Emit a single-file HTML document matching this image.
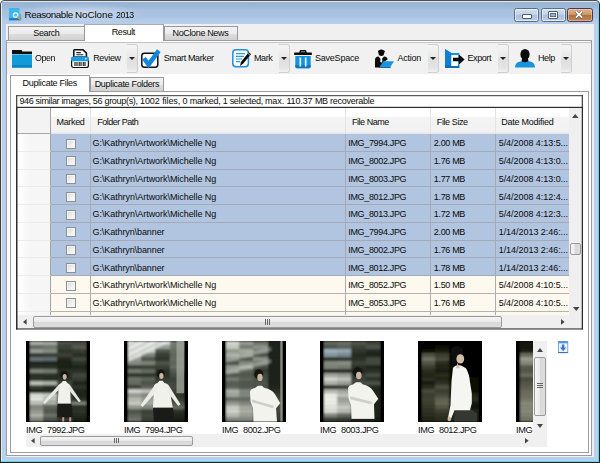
<!DOCTYPE html>
<html><head><meta charset="utf-8"><title>Reasonable NoClone 2013</title>
<style>
*,*:before,*:after{box-sizing:border-box;margin:0;padding:0}
html,body{width:600px;height:463px;overflow:hidden;background:#fff}
body{font-family:"Liberation Sans",sans-serif;font-size:9px;color:#000;position:relative}
#win{position:absolute;left:0;top:0;width:600px;height:463px;background:#b7d0ec;overflow:hidden}
#win>*,.row>*{position:absolute}
.t{position:absolute;white-space:pre;line-height:12px;color:#0a0a0a;z-index:5}
#title{left:0;top:0;width:600px;height:24px;background:linear-gradient(#99b3d5 0,#9cb6d7 27%,#a7c0de 40%,#aac4e1 72%,#b3c9e8 80%,#b6ceea 100%)}
#client{left:6px;top:24px;width:588px;height:433px;background:#f0f0f0}
.wb{top:8px;height:14px;border:1px solid #5b6c86;border-radius:2.5px;background:linear-gradient(#d3e0f0,#c2d2e8 45%,#a9bfdc 52%,#bccfe7);box-shadow:inset 0 0 0 1px rgba(255,255,255,.55)}
.wb *{position:absolute}
.tab{border:1px solid #96989d;border-bottom:none;background:linear-gradient(#f2f2f2,#ebebeb 50%,#dddddd 52%,#d0d0d0)}
.tab.on{background:#fff;z-index:3}
.page{background:#fff;border:1px solid #9a9ca1}
.dd{top:44px;height:28.5px;width:11px;border:1px solid #cfcfcf;border-left:none;border-radius:0 3px 3px 0;background:linear-gradient(#f4f4f4,#e9e9e9 45%,#dedede 50%,#e4e4e4 85%,#f2f2f2)}
.dd:after{content:"";position:absolute;left:2.2px;top:12px;border:3.2px solid transparent;border-top:3.8px solid #222;border-bottom:none}
svg{position:absolute;overflow:visible}
.hdr{top:108px;height:26px;background:linear-gradient(#fff,#fff 32%,#f4f4f4 36%,#f2f2f2 90%,#e4e4e4);border-right:1px solid #e3e3e3}
.row{position:absolute;left:0;width:600px;height:17.75px}
.row .c{top:0;height:17.75px;background:#fdf9ef;border-right:1px solid #adadb0;border-bottom:1px solid #b4b4b8}
.row .c.l{border-right:none}
.row.sel .c{background:#b1c5e0;border-color:#a4aab6}
.row:before{content:"";position:absolute;left:17px;top:0;width:34px;height:17.75px;background:linear-gradient(90deg,#fff,#f6f6f6 40%);border-right:1px solid #a3a3a3;border-bottom:1px solid #ebebeb}
.cb{width:10px;height:10px;border:1px solid #8e8f8f;background:linear-gradient(135deg,#d5d7d8,#f6f6f6 70%);box-shadow:inset 0 0 0 1px #f4f4f4}
.sth{position:absolute;border:1px solid #9a9a9a;border-radius:2px;background:linear-gradient(#f6f6f6,#eaeaea 45%,#d8d8d8 50%,#dedede)}
.sth.v{background:linear-gradient(90deg,#f6f6f6,#eaeaea 45%,#d8d8d8 50%,#dedede)}
.thumb{top:341.3px;width:64px;height:80.4px;background:#000;overflow:hidden}
</style></head><body>
<div id="win">
<div id="title"></div>
<!-- frame edges -->
<div style="left:0;top:0;width:1px;height:463px;background:#3f4036"></div>
<div style="left:1px;top:1px;width:1px;height:461px;background:#e4ecf6"></div>
<div style="left:599px;top:0;width:1px;height:463px;background:#1c2226"></div>
<div style="left:598px;top:1px;width:1px;height:461px;background:#5fd4f2"></div>
<div style="left:0;top:0;width:600px;height:1px;background:#515246"></div>
<div style="left:1px;top:1px;width:598px;height:1px;background:#dbe5f2"></div>
<div style="left:0;top:462px;width:600px;height:1px;background:#1d2024"></div>
<div style="left:1px;top:461px;width:598px;height:1px;background:#5fd4f2"></div>
<!-- rounded corners -->
<svg style="left:0;top:0" width="4" height="4"><path d="M0 0H4V1Q1 1 1 4H0z" fill="#fff"/><path d="M.5 4Q.5 .5 4 .5" fill="none" stroke="#4e4f43"/></svg>
<svg style="left:596px;top:0" width="4" height="4"><path d="M4 0H0V1Q3 1 3 4H4z" fill="#fff"/><path d="M3.5 4Q3.5 .5 0 .5" fill="none" stroke="#3a3c36"/></svg>
<!-- app icon -->
<svg style="left:8.8px;top:7.7px" width="12.2" height="12.3" viewBox="0 0 12.2 12.3"><path d="M0 0H10.4V5.2L12.2 6.4V12.3H0z" fill="#3db7e9"/><rect y="10.2" width="12.2" height="2.1" fill="#1b7ccb"/><circle cx="6.6" cy="7" r="2.3" fill="#55c3ef" stroke="#fff" stroke-width="1.1"/><path d="M8.6 9L11.4 11.6" stroke="#e89a30" stroke-width="1.5" stroke-linecap="round"/></svg>
<div style="left:14px;top:3px;width:132px;height:20px;border-radius:10px;background:radial-gradient(ellipse at center,rgba(255,255,255,.42),rgba(255,255,255,0) 70%)"></div>
<span class="t " id="t54" style="left:24.50px;top:9.40px;font-size:9.8px;letter-spacing:-0.411px;">Reasonable </span><span class="t " id="t55" style="left:75.00px;top:9.40px;font-size:9.8px;letter-spacing:-0.043px;">NoClone </span><span class="t " id="t56" style="left:115.50px;top:9.40px;font-size:9.8px;letter-spacing:-0.450px;transform:scaleX(0.888);transform-origin:0 0;">2013</span>
<!-- window buttons -->
<div class="wb" style="left:514px;width:25px"><div style="left:7.2px;top:5.4px;width:9.5px;height:4.2px;border:1px solid #4c5c74;background:#fff;border-radius:1px"></div></div>
<div class="wb" style="left:541px;width:25px"><div style="left:6.3px;top:2.4px;width:9.4px;height:7.6px;border:1px solid #4c5c74;background:#fff;border-radius:1px"><div style="left:1px;top:1px;width:5.4px;height:3.6px;border:1px solid #5b6b83;background:#9fb3cf"></div></div></div>
<div class="wb" style="left:567px;width:25.5px;border-color:#4a3560;background:linear-gradient(#e0b183,#d19a64 45%,#aa7040 52%,#c0874f);box-shadow:inset 0 0 0 1px rgba(255,225,190,.45)"><svg style="left:7px;top:2px" width="8" height="7.2" viewBox="0 0 9 8"><path d="M1 0.5L8 7.5M8 0.5L1 7.5" stroke="#5b4a4a" stroke-width="3.3"/><path d="M1 0.5L8 7.5M8 0.5L1 7.5" stroke="#fff" stroke-width="2"/></svg></div>

<div id="client"></div>

<!-- main tabs -->
<div class="tab" style="left:8px;top:26px;width:76.5px;height:14.5px"></div>
<div class="tab" style="left:163.5px;top:26px;width:74.5px;height:14.5px"></div>
<div class="page" style="left:6px;top:40px;width:586px;height:416px"></div>
<div class="tab on" style="left:84px;top:24px;width:80px;height:17px;border-top-color:#aab"></div>
<span class="t " id="t57" style="left:33.30px;top:26.88px;font-size:9.0px;letter-spacing:-0.389px;">Search</span><span class="t " id="t58" style="left:111.75px;top:25.88px;font-size:9.0px;letter-spacing:-0.378px;">Result</span><span class="t " id="t59" style="left:172.50px;top:27.48px;font-size:9.0px;letter-spacing:-0.353px;">NoClone News</span>

<!-- toolbar -->
<div style="left:7px;top:42px;width:584px;height:31.5px;background:#f1f1f1;border-top:1px solid #c4c4c4"></div>
<svg style="left:12px;top:50px" width="20" height="18" viewBox="0 0 20 18"><path d="M0 0h9.5l1 1.6H20V4H0z" fill="#0c0c0c"/><rect y="4.4" width="20" height="13.2" fill="#129bd9"/><rect y="15" width="20" height="2.6" fill="#0d83c2"/></svg>
<span class="t " id="t40" style="left:34.70px;top:52.48px;font-size:9.0px;letter-spacing:-0.450px;transform:scaleX(0.989);transform-origin:0 0;">Open</span><svg style="left:70.8px;top:49px" width="18" height="19" viewBox="0 0 18 19"><path d="M2.8 8V1.6Q2.8 .8 3.6 .8H12L15.4 4V8z" fill="#fff" stroke="#111" stroke-width="1.6"/><path d="M5.3 3.6h4.5M5.3 5.8h7" stroke="#222" stroke-width="1.1"/><rect x=".6" y="10.5" width="16.8" height="8" rx="2" fill="#fff" stroke="#111" stroke-width="1.2"/><rect x="0" y="7.6" width="18" height="4.6" rx="1.8" fill="#1d9be0"/><circle cx="14.7" cy="9.6" r=".9" fill="#dff"/><path d="M4 13v4M6 13v4M8.2 13v4M10 13v4M12.3 13v4M14 13v4" stroke="#111" stroke-width="1.1"/></svg>
<span class="t " id="t41" style="left:93.20px;top:52.48px;font-size:9.0px;letter-spacing:-0.319px;">Review</span><div class="dd" style="left:126.7px"></div><svg style="left:140.8px;top:49px" width="20" height="19" viewBox="0 0 20 19"><rect x=".8" y="4.2" width="16" height="14" rx="2.6" fill="#fff" stroke="#111" stroke-width="1.5"/><path d="M3 9.2L7.6 15.6L17.8 1.6" fill="none" stroke="#1487dd" stroke-width="4.5" stroke-linejoin="miter"/></svg>
<span class="t " id="t42" style="left:163.70px;top:52.48px;font-size:9.0px;letter-spacing:-0.376px;">Smart Marker</span><svg style="left:231.5px;top:49px" width="20" height="19" viewBox="0 0 20 19"><rect x=".8" y=".8" width="15.6" height="17" rx="3.2" fill="#fff" stroke="#1c8fe0" stroke-width="1.5"/><path d="M4 4.6h9M4 7.3h8M4 10h6M4 12.7h4" stroke="#2a9be6" stroke-width="1.2"/><path d="M16.8 3.2L19 5.2L11.3 14.6L8 17L8.9 13z" fill="#0b0b0b"/><path d="M16 4.4L18 6.3" stroke="#fff" stroke-width=".7"/></svg>
<span class="t " id="t43" style="left:254.00px;top:52.48px;font-size:9.0px;letter-spacing:-0.375px;">Mark</span><div class="dd" style="left:278.5px"></div><svg style="left:294px;top:49.5px" width="18" height="19" viewBox="0 0 18 19"><path d="M5.2 3L5.8 .6Q6 0 6.6 0H11.4Q12 0 12.2 .6L12.8 3z" fill="#111"/><rect x="7" y="1.2" width="4" height="1.3" fill="#888"/><rect x="0" y="2.5" width="18" height="2.6" rx=".8" fill="#0d0d0d"/><path d="M1.3 6h15.4v10.6q0 1.6-1.6 1.6H2.9q-1.6 0-1.6-1.6z" fill="#1593dc"/><path d="M1.3 15h15.4v1.6q0 1.6-1.6 1.6H2.9q-1.6 0-1.6-1.6z" fill="#0e77bd"/><path d="M6.3 7.5v9M11.7 7.5v9" stroke="#e8f4fc" stroke-width="1.7"/></svg>
<span class="t " id="t44" style="left:315.00px;top:52.48px;font-size:9.0px;letter-spacing:-0.227px;">SaveSpace</span><svg style="left:374px;top:49px" width="20" height="19" viewBox="0 0 20 19"><ellipse cx="7.3" cy="3.8" rx="2.9" ry="3.3" fill="#0b0b0b"/><path d="M3.8 3.2h7.2l-.6-1.6h-6z" fill="#0b0b0b"/><path d="M1 18.5V11Q1 8 4.5 7.6L7.3 10.5L10 7.6Q13.5 8 13.6 10.5L9 13.5L7 18.5z" fill="#0b0b0b"/><path d="M6.7 8.3h1.2l.5 4.2-1.1 1.2-1.1-1.2z" fill="#fff"/><path d="M9.5 12.2H20L16.4 18H5.6z" fill="#1a94e0"/><path d="M4.6 18h12v1H4.6z" fill="#0c6db5"/></svg>
<span class="t " id="t45" style="left:397.50px;top:52.48px;font-size:9.0px;letter-spacing:-0.253px;">Action</span><div class="dd" style="left:427.5px"></div><svg style="left:444.7px;top:49px" width="20" height="19" viewBox="0 0 20 19"><path d="M0 0L6.3 4H14.3V19H0z" fill="#1a94e0"/><path d="M0 0L6.3 4V19H0z" fill="#0f7fcf"/><path d="M0 16.5h14.3V19H0z" fill="#0c6db5"/><rect x="6.3" y="6" width="6.6" height="11" fill="#fff"/><path d="M8 8.7h6V5.6L19.6 10.5L14 15.4V12.3H8z" fill="#0b0b0b"/></svg>
<span class="t " id="t46" style="left:467.50px;top:52.48px;font-size:9.0px;letter-spacing:-0.419px;">Export</span><div class="dd" style="left:498px"></div><svg style="left:515px;top:49px" width="20" height="19" viewBox="0 0 20 19"><path d="M0 18.6Q0 13.4 5 12.6L10 11.6L15 12.6Q20 13.4 20 18.6z" fill="#1794db"/><ellipse cx="10" cy="5.4" rx="4.6" ry="5.4" fill="#0b0b0b"/><path d="M7.2 9h5.6l.7 3.2q-3.5 2-7 0z" fill="#0b0b0b"/></svg>
<span class="t " id="t47" style="left:538.00px;top:52.48px;font-size:9.0px;letter-spacing:-0.379px;">Help</span><div class="dd" style="left:561px"></div>

<!-- sub tabs -->
<div class="tab" style="left:89.7px;top:76.8px;width:74px;height:15px"></div>
<div class="page" style="left:10.3px;top:91px;width:579px;height:361.5px"></div>
<div class="tab on" style="left:10.3px;top:74.7px;width:80px;height:17.5px"></div>
<span class="t " id="t60" style="left:22.50px;top:76.88px;font-size:9.0px;letter-spacing:-0.302px;">Duplicate Files</span><span class="t " id="t61" style="left:94.70px;top:78.18px;font-size:9.0px;letter-spacing:-0.325px;">Duplicate Folders</span>

<!-- status box -->
<div style="left:16px;top:95px;width:567px;height:13px;background:#fff"></div>
<span class="t " id="t62" style="left:19.40px;top:95.18px;font-size:9.0px;letter-spacing:-0.332px;">946 similar images, </span><span class="t " id="t63" style="left:92.80px;top:95.18px;font-size:9.0px;letter-spacing:-0.295px;">56 group(s), </span><span class="t " id="t64" style="left:140.00px;top:95.18px;font-size:9.0px;letter-spacing:-0.078px;">1002 files, </span><span class="t " id="t65" style="left:182.60px;top:95.18px;font-size:9.0px;letter-spacing:-0.233px;">0 marked, </span><span class="t " id="t66" style="left:222.80px;top:95.18px;font-size:9.0px;letter-spacing:-0.319px;">1 selected, </span><span class="t " id="t67" style="left:265.00px;top:95.18px;font-size:9.0px;letter-spacing:-0.123px;">max. </span><span class="t " id="t68" style="left:286.40px;top:95.18px;font-size:9.0px;letter-spacing:-0.125px;">110.37 </span><span class="t " id="t69" style="left:314.90px;top:95.18px;font-size:9.0px;letter-spacing:-0.305px;">MB </span><span class="t " id="t70" style="left:330.00px;top:95.18px;font-size:9.0px;letter-spacing:-0.257px;">recoverable</span>

<!-- grid -->
<div style="left:16px;top:107px;width:567px;height:222.5px;background:#fff"></div>
<svg style="left:0;top:0;z-index:6" width="600" height="463"><g fill="#2c2c28"><rect x="16" y="106.8" width="1.5" height="222.7"/><rect x="581.7" y="106.8" width="1.3" height="222.7"/><rect x="16" y="106.8" width="567" height="1.2"/><rect x="16" y="328.4" width="567" height="1.1"/></g><g fill="#4a4a46"><rect x="16" y="95.1" width="567" height="1.1"/><rect x="16" y="95.1" width="1.3" height="12"/><rect x="581.7" y="95.1" width="1.3" height="12"/></g></svg>
<div class="hdr" style="left:17px;width:34px;background:#f3f3f3;border-right:1px solid #a3a3a3;border-bottom:1px solid #a8a8a8;box-shadow:inset 1px 1px 0 #fff"></div>
<div class="hdr" style="left:51px;width:39.5px"></div>
<div class="hdr" style="left:90.5px;width:255.5px"></div>
<div class="hdr" style="left:346px;width:85px"></div>
<div class="hdr" style="left:431px;width:64.5px"></div>
<div class="hdr" style="left:495.5px;width:73.5px;border-right:none"></div>
<span class="t " id="t71" style="left:56.50px;top:115.68px;font-size:9.0px;letter-spacing:-0.336px;">Marked</span><span class="t " id="t72" style="left:97.20px;top:115.68px;font-size:9.0px;letter-spacing:-0.485px;">Folder Path</span><span class="t " id="t73" style="left:352.00px;top:115.68px;font-size:9.0px;letter-spacing:-0.468px;">File Name</span><span class="t " id="t74" style="left:436.80px;top:115.68px;font-size:9.0px;letter-spacing:-0.402px;">File Size</span><span class="t " id="t75" style="left:501.20px;top:115.68px;font-size:9.0px;letter-spacing:-0.256px;">Date Modified</span>
<div style="left:17px;top:134px;width:552px;height:181px;overflow:hidden">
<div style="left:-17px;top:-134px;width:600px;height:463px;position:absolute">
<div class="row sel" style="top:134.00px"><i class="c" style="left:51.0px;width:39.5px"></i><i class="c" style="left:90.5px;width:255.5px"></i><i class="c" style="left:346.0px;width:85.0px"></i><i class="c" style="left:431.0px;width:64.5px"></i><i class="c l" style="left:495.5px;width:73.5px"></i><i class="cb" style="left:65.5px;top:4.5px"></i></div>
<span class="t " id="t0" style="left:92.50px;top:137.48px;font-size:9.0px;letter-spacing:-0.060px;">G:\Kathryn\Artwork\Michelle Ng</span><span class="t " id="t1" style="left:348.30px;top:137.48px;font-size:9.0px;letter-spacing:-0.344px;">IMG_7994.JPG</span><span class="t " id="t2" style="left:433.80px;top:137.48px;font-size:9.0px;letter-spacing:-0.333px;">2.00 MB</span><span class="t " id="t3" style="left:498.70px;top:137.48px;font-size:9.0px;letter-spacing:-0.042px;">5/4/2008 4:13:5...</span>
<div class="row sel" style="top:151.75px"><i class="c" style="left:51.0px;width:39.5px"></i><i class="c" style="left:90.5px;width:255.5px"></i><i class="c" style="left:346.0px;width:85.0px"></i><i class="c" style="left:431.0px;width:64.5px"></i><i class="c l" style="left:495.5px;width:73.5px"></i><i class="cb" style="left:65.5px;top:4.5px"></i></div>
<span class="t " id="t4" style="left:92.50px;top:155.23px;font-size:9.0px;letter-spacing:-0.060px;">G:\Kathryn\Artwork\Michelle Ng</span><span class="t " id="t5" style="left:348.30px;top:155.23px;font-size:9.0px;letter-spacing:-0.344px;">IMG_8002.JPG</span><span class="t " id="t6" style="left:433.80px;top:155.23px;font-size:9.0px;letter-spacing:-0.333px;">1.76 MB</span><span class="t " id="t7" style="left:498.70px;top:155.23px;font-size:9.0px;letter-spacing:-0.042px;">5/4/2008 4:13:0...</span>
<div class="row sel" style="top:169.50px"><i class="c" style="left:51.0px;width:39.5px"></i><i class="c" style="left:90.5px;width:255.5px"></i><i class="c" style="left:346.0px;width:85.0px"></i><i class="c" style="left:431.0px;width:64.5px"></i><i class="c l" style="left:495.5px;width:73.5px"></i><i class="cb" style="left:65.5px;top:4.5px"></i></div>
<span class="t " id="t8" style="left:92.50px;top:172.98px;font-size:9.0px;letter-spacing:-0.060px;">G:\Kathryn\Artwork\Michelle Ng</span><span class="t " id="t9" style="left:348.30px;top:172.98px;font-size:9.0px;letter-spacing:-0.344px;">IMG_8003.JPG</span><span class="t " id="t10" style="left:433.80px;top:172.98px;font-size:9.0px;letter-spacing:-0.333px;">1.77 MB</span><span class="t " id="t11" style="left:498.70px;top:172.98px;font-size:9.0px;letter-spacing:-0.042px;">5/4/2008 4:13:0...</span>
<div class="row sel" style="top:187.25px"><i class="c" style="left:51.0px;width:39.5px"></i><i class="c" style="left:90.5px;width:255.5px"></i><i class="c" style="left:346.0px;width:85.0px"></i><i class="c" style="left:431.0px;width:64.5px"></i><i class="c l" style="left:495.5px;width:73.5px"></i><i class="cb" style="left:65.5px;top:4.5px"></i></div>
<span class="t " id="t12" style="left:92.50px;top:190.73px;font-size:9.0px;letter-spacing:-0.060px;">G:\Kathryn\Artwork\Michelle Ng</span><span class="t " id="t13" style="left:348.30px;top:190.73px;font-size:9.0px;letter-spacing:-0.344px;">IMG_8012.JPG</span><span class="t " id="t14" style="left:433.80px;top:190.73px;font-size:9.0px;letter-spacing:-0.333px;">1.78 MB</span><span class="t " id="t15" style="left:498.70px;top:190.73px;font-size:9.0px;letter-spacing:-0.042px;">5/4/2008 4:12:4...</span>
<div class="row sel" style="top:205.00px"><i class="c" style="left:51.0px;width:39.5px"></i><i class="c" style="left:90.5px;width:255.5px"></i><i class="c" style="left:346.0px;width:85.0px"></i><i class="c" style="left:431.0px;width:64.5px"></i><i class="c l" style="left:495.5px;width:73.5px"></i><i class="cb" style="left:65.5px;top:4.5px"></i></div>
<span class="t " id="t16" style="left:92.50px;top:208.48px;font-size:9.0px;letter-spacing:-0.060px;">G:\Kathryn\Artwork\Michelle Ng</span><span class="t " id="t17" style="left:348.30px;top:208.48px;font-size:9.0px;letter-spacing:-0.344px;">IMG_8013.JPG</span><span class="t " id="t18" style="left:433.80px;top:208.48px;font-size:9.0px;letter-spacing:-0.333px;">1.72 MB</span><span class="t " id="t19" style="left:498.70px;top:208.48px;font-size:9.0px;letter-spacing:-0.042px;">5/4/2008 4:12:3...</span>
<div class="row sel" style="top:222.75px"><i class="c" style="left:51.0px;width:39.5px"></i><i class="c" style="left:90.5px;width:255.5px"></i><i class="c" style="left:346.0px;width:85.0px"></i><i class="c" style="left:431.0px;width:64.5px"></i><i class="c l" style="left:495.5px;width:73.5px"></i><i class="cb" style="left:65.5px;top:4.5px"></i></div>
<span class="t " id="t20" style="left:92.50px;top:226.23px;font-size:9.0px;letter-spacing:-0.091px;">G:\Kathryn\banner</span><span class="t " id="t21" style="left:348.30px;top:226.23px;font-size:9.0px;letter-spacing:-0.344px;">IMG_7994.JPG</span><span class="t " id="t22" style="left:433.80px;top:226.23px;font-size:9.0px;letter-spacing:-0.333px;">2.00 MB</span><span class="t " id="t23" style="left:498.70px;top:226.23px;font-size:9.0px;letter-spacing:-0.042px;">1/14/2013 2:46:...</span>
<div class="row sel" style="top:240.50px"><i class="c" style="left:51.0px;width:39.5px"></i><i class="c" style="left:90.5px;width:255.5px"></i><i class="c" style="left:346.0px;width:85.0px"></i><i class="c" style="left:431.0px;width:64.5px"></i><i class="c l" style="left:495.5px;width:73.5px"></i><i class="cb" style="left:65.5px;top:4.5px"></i></div>
<span class="t " id="t24" style="left:92.50px;top:243.98px;font-size:9.0px;letter-spacing:-0.091px;">G:\Kathryn\banner</span><span class="t " id="t25" style="left:348.30px;top:243.98px;font-size:9.0px;letter-spacing:-0.344px;">IMG_8002.JPG</span><span class="t " id="t26" style="left:433.80px;top:243.98px;font-size:9.0px;letter-spacing:-0.333px;">1.76 MB</span><span class="t " id="t27" style="left:498.70px;top:243.98px;font-size:9.0px;letter-spacing:-0.042px;">1/14/2013 2:46:...</span>
<div class="row sel" style="top:258.25px"><i class="c" style="left:51.0px;width:39.5px"></i><i class="c" style="left:90.5px;width:255.5px"></i><i class="c" style="left:346.0px;width:85.0px"></i><i class="c" style="left:431.0px;width:64.5px"></i><i class="c l" style="left:495.5px;width:73.5px"></i><i class="cb" style="left:65.5px;top:4.5px"></i></div>
<span class="t " id="t28" style="left:92.50px;top:261.73px;font-size:9.0px;letter-spacing:-0.091px;">G:\Kathryn\banner</span><span class="t " id="t29" style="left:348.30px;top:261.73px;font-size:9.0px;letter-spacing:-0.344px;">IMG_8012.JPG</span><span class="t " id="t30" style="left:433.80px;top:261.73px;font-size:9.0px;letter-spacing:-0.333px;">1.78 MB</span><span class="t " id="t31" style="left:498.70px;top:261.73px;font-size:9.0px;letter-spacing:-0.042px;">1/14/2013 2:46:...</span>
<div class="row" style="top:276.00px"><i class="c" style="left:51.0px;width:39.5px"></i><i class="c" style="left:90.5px;width:255.5px"></i><i class="c" style="left:346.0px;width:85.0px"></i><i class="c" style="left:431.0px;width:64.5px"></i><i class="c l" style="left:495.5px;width:73.5px"></i><i class="cb" style="left:65.5px;top:4.5px"></i></div>
<span class="t " id="t32" style="left:92.50px;top:279.48px;font-size:9.0px;letter-spacing:-0.060px;">G:\Kathryn\Artwork\Michelle Ng</span><span class="t " id="t33" style="left:348.30px;top:279.48px;font-size:9.0px;letter-spacing:-0.344px;">IMG_8052.JPG</span><span class="t " id="t34" style="left:433.80px;top:279.48px;font-size:9.0px;letter-spacing:-0.333px;">1.50 MB</span><span class="t " id="t35" style="left:498.70px;top:279.48px;font-size:9.0px;letter-spacing:-0.042px;">5/4/2008 4:10:5...</span>
<div class="row" style="top:293.75px"><i class="c" style="left:51.0px;width:39.5px"></i><i class="c" style="left:90.5px;width:255.5px"></i><i class="c" style="left:346.0px;width:85.0px"></i><i class="c" style="left:431.0px;width:64.5px"></i><i class="c l" style="left:495.5px;width:73.5px"></i><i class="cb" style="left:65.5px;top:4.5px"></i></div>
<span class="t " id="t36" style="left:92.50px;top:297.23px;font-size:9.0px;letter-spacing:-0.060px;">G:\Kathryn\Artwork\Michelle Ng</span><span class="t " id="t37" style="left:348.30px;top:297.23px;font-size:9.0px;letter-spacing:-0.344px;">IMG_8053.JPG</span><span class="t " id="t38" style="left:433.80px;top:297.23px;font-size:9.0px;letter-spacing:-0.333px;">1.76 MB</span><span class="t " id="t39" style="left:498.70px;top:297.23px;font-size:9.0px;letter-spacing:-0.042px;">5/4/2008 4:10:5...</span>
<div class="row" style="top:311.50px"><i class="c" style="left:51.0px;width:39.5px"></i><i class="c" style="left:90.5px;width:255.5px"></i><i class="c" style="left:346.0px;width:85.0px"></i><i class="c" style="left:431.0px;width:64.5px"></i><i class="c l" style="left:495.5px;width:73.5px"></i></div>

</div></div>
<!-- v scrollbar -->
<div style="left:569px;top:108px;width:12px;height:207px;background:#efefef"></div>
<svg style="left:572px;top:114px" width="6.5" height="4"><path d="M0 4L3.25 0L6.5 4z" fill="#444"/></svg>
<svg style="left:572.7px;top:307px" width="6.5" height="4"><path d="M0 0L3.25 4L6.5 0z" fill="#444"/></svg>
<div class="sth v" style="left:570.3px;top:243.3px;width:10.5px;height:11.7px"></div>
<!-- h scrollbar -->
<div style="left:17px;top:315px;width:564px;height:13px;background:#efefef"></div>
<svg style="left:22.5px;top:319px" width="3.6" height="5.8"><path d="M3.6 0L0 2.9L3.6 5.8z" fill="#444"/></svg>
<svg style="left:560.5px;top:319px" width="3.6" height="5.8"><path d="M0 0L3.6 2.9L0 5.8z" fill="#444"/></svg>
<div class="sth" style="left:32.5px;top:316px;width:469px;height:11.5px"></div>
<div style="left:264.5px;top:319px;width:1px;height:6px;background:#666;box-shadow:2px 0 0 #666,4px 0 0 #666"></div>

<!-- thumbnails -->
<svg width="0" height="0" style="left:0;top:0"><defs><filter id="bl" x="0" y="0" width="1" height="1"><feGaussianBlur stdDeviation="0.9"/></filter></defs></svg><div class="thumb" style="left:25.8px;width:64px"><svg style="left:0;top:0" width="64" height="80.4" viewBox="0 0 64 80" preserveAspectRatio="none"><g filter="url(#bl)"><rect x="3.4" y="0" width="13.9" height="4.3" fill="#a6ada4"/><rect x="17" y="0" width="14.3" height="4.3" fill="#9da49b"/><rect x="31" y="0" width="15.3" height="4.3" fill="#494e44"/><rect x="46" y="0" width="14.9" height="4.3" fill="#42483e"/><rect x="3.4" y="4" width="13.9" height="4.3" fill="#60675d"/><rect x="17" y="4" width="14.3" height="4.3" fill="#6f766c"/><rect x="31" y="4" width="15.3" height="4.3" fill="#3d4238"/><rect x="46" y="4" width="14.9" height="4.3" fill="#545a50"/><rect x="3.4" y="8" width="13.9" height="4.3" fill="#969d94"/><rect x="17" y="8" width="14.3" height="4.3" fill="#848b82"/><rect x="31" y="8" width="15.3" height="4.3" fill="#30362c"/><rect x="46" y="8" width="14.9" height="4.3" fill="#373d32"/><rect x="3.4" y="12" width="13.9" height="4.3" fill="#30362c"/><rect x="17" y="12" width="14.3" height="4.3" fill="#373d32"/><rect x="31" y="12" width="15.3" height="4.3" fill="#3d4238"/><rect x="46" y="12" width="14.9" height="4.3" fill="#2b3026"/><rect x="3.4" y="16" width="13.9" height="4.3" fill="#667279"/><rect x="17" y="16" width="14.3" height="4.3" fill="#5e6a72"/><rect x="31" y="16" width="15.3" height="4.3" fill="#23281e"/><rect x="46" y="16" width="14.9" height="4.3" fill="#42483e"/><rect x="3.4" y="20" width="13.9" height="4.3" fill="#1f251b"/><rect x="17" y="20" width="14.3" height="4.3" fill="#1f251b"/><rect x="31" y="20" width="15.3" height="4.3" fill="#1b2116"/><rect x="46" y="20" width="14.9" height="4.3" fill="#2b3026"/><rect x="3.4" y="24" width="13.9" height="4.3" fill="#2b3026"/><rect x="17" y="24" width="14.3" height="4.3" fill="#2b3026"/><rect x="31" y="24" width="15.3" height="4.3" fill="#1b2116"/><rect x="46" y="24" width="14.9" height="4.3" fill="#1f251b"/><rect x="3.4" y="28" width="13.9" height="4.3" fill="#7f847a"/><rect x="17" y="28" width="14.3" height="4.3" fill="#767b71"/><rect x="31" y="28" width="15.3" height="4.3" fill="#2b3026"/><rect x="46" y="28" width="14.9" height="4.3" fill="#2b3026"/><rect x="3.4" y="32" width="13.9" height="4.3" fill="#2b3026"/><rect x="17" y="32" width="14.3" height="4.3" fill="#2b3026"/><rect x="31" y="32" width="15.3" height="4.3" fill="#252b21"/><rect x="46" y="32" width="14.9" height="4.3" fill="#43493e"/><rect x="3.4" y="36" width="13.9" height="4.3" fill="#2b3026"/><rect x="17" y="36" width="14.3" height="4.3" fill="#252b21"/><rect x="31" y="36" width="15.3" height="4.3" fill="#2b3026"/><rect x="46" y="36" width="14.9" height="4.3" fill="#373d32"/><rect x="3.4" y="40" width="13.9" height="4.3" fill="#c1c5bc"/><rect x="17" y="40" width="14.3" height="4.3" fill="#afb3aa"/><rect x="31" y="40" width="15.3" height="4.3" fill="#43493e"/><rect x="46" y="40" width="14.9" height="4.3" fill="#1f251b"/><rect x="3.4" y="44" width="13.9" height="4.3" fill="#373d32"/><rect x="17" y="44" width="14.3" height="4.3" fill="#2b3026"/><rect x="31" y="44" width="15.3" height="4.3" fill="#373d32"/><rect x="46" y="44" width="14.9" height="4.3" fill="#30362c"/><rect x="3.4" y="48" width="13.9" height="4.3" fill="#1f251b"/><rect x="17" y="48" width="14.3" height="4.3" fill="#252b21"/><rect x="31" y="48" width="15.3" height="4.3" fill="#2b3026"/><rect x="46" y="48" width="14.9" height="4.3" fill="#1f251b"/><rect x="3.4" y="52" width="13.9" height="4.3" fill="#dcdfd8"/><rect x="17" y="52" width="14.3" height="4.3" fill="#cacec5"/><rect x="31" y="52" width="15.3" height="4.3" fill="#494e44"/><rect x="46" y="52" width="14.9" height="4.3" fill="#23281e"/><rect x="3.4" y="56" width="13.9" height="4.3" fill="#e5e8e1"/><rect x="17" y="56" width="14.3" height="4.3" fill="#c1c5bc"/><rect x="31" y="56" width="15.3" height="4.3" fill="#43493e"/><rect x="46" y="56" width="14.9" height="4.3" fill="#2b3026"/><rect x="3.4" y="60" width="13.9" height="4.3" fill="#a2a79e"/><rect x="17" y="60" width="14.3" height="4.3" fill="#848980"/><rect x="31" y="60" width="15.3" height="4.3" fill="#60665c"/><rect x="46" y="60" width="14.9" height="4.3" fill="#60665c"/><rect x="3.4" y="64" width="13.9" height="4.3" fill="#848980"/><rect x="17" y="64" width="14.3" height="4.3" fill="#60655c"/><rect x="31" y="64" width="15.3" height="4.3" fill="#191b16"/><rect x="46" y="64" width="14.9" height="4.3" fill="#2b3026"/><rect x="3.4" y="68" width="13.9" height="4.3" fill="#969b92"/><rect x="17" y="68" width="14.3" height="4.3" fill="#545950"/><rect x="31" y="68" width="15.3" height="4.3" fill="#10120c"/><rect x="46" y="68" width="14.9" height="4.3" fill="#30362c"/><rect x="3.4" y="72" width="13.9" height="4.3" fill="#afb3aa"/><rect x="17" y="72" width="14.3" height="4.3" fill="#6f736a"/><rect x="31" y="72" width="15.3" height="4.3" fill="#191b16"/><rect x="46" y="72" width="14.9" height="4.3" fill="#252b21"/><rect x="3.4" y="76" width="13.9" height="4.3" fill="#848980"/><rect x="17" y="76" width="14.3" height="4.3" fill="#4e534a"/><rect x="31" y="76" width="15.3" height="4.3" fill="#3d3831"/><rect x="46" y="76" width="14.9" height="4.3" fill="#1b2116"/><path d="M3.4 61.2H31V62.6H3.4z" fill="#e4e6e0" opacity=".8"/><path d="M46 61.2H60.6V62.6H46z" fill="#a8aca4" opacity=".8"/></g><path d="M32.6 44.5Q32.8 42.5 35 42L37 39.8H39.8L41.6 42Q43.8 42.5 44 44.5L44.8 62.4H31.8z" fill="#f1f1ec"/>
<path d="M33 43.2L17 61L18.8 62.6L34.6 47z" fill="#e9e9e3"/><path d="M43.6 43.2L54.8 59.6L53 61L42.2 48z" fill="#e9e9e3"/>
<path d="M31.6 62.4H45.4L46.8 75.8H31.2z" fill="#1a1b18"/>
<path d="M36.2 75.8h2v4.2h-2zM43.2 75.8h2v4.2h-2z" fill="#b3a08c"/>
<ellipse cx="38.3" cy="33.8" rx="3.7" ry="4.1" fill="#151512"/><ellipse cx="38.7" cy="35.7" rx="2" ry="2.8" fill="#c9b7a2"/></svg></div>
<span class="t " id="t48" style="left:26.10px;top:424.41px;font-size:9.2px;letter-spacing:-0.402px;">IMG_7992.JPG</span>
<div class="thumb" style="left:123.8px;width:64px"><svg style="left:0;top:0" width="64" height="80.4" viewBox="0 0 64 80" preserveAspectRatio="none"><g filter="url(#bl)"><rect x="3.4" y="0" width="13.9" height="4.3" fill="#edf1ed"/><rect x="17" y="0" width="14.3" height="4.3" fill="#e3e8e5"/><rect x="31" y="0" width="15.3" height="4.3" fill="#cacecb"/><rect x="46" y="0" width="14.9" height="4.3" fill="#72786e"/><rect x="3.4" y="4" width="13.9" height="4.3" fill="#e5e8e5"/><rect x="17" y="4" width="14.3" height="4.3" fill="#d8ddd9"/><rect x="31" y="4" width="15.3" height="4.3" fill="#969b96"/><rect x="46" y="4" width="14.9" height="4.3" fill="#6f756a"/><rect x="3.4" y="8" width="13.9" height="4.3" fill="#dce0dc"/><rect x="17" y="8" width="14.3" height="4.3" fill="#c1c5c1"/><rect x="31" y="8" width="15.3" height="4.3" fill="#4e544a"/><rect x="46" y="8" width="14.9" height="4.3" fill="#676d63"/><rect x="3.4" y="12" width="13.9" height="4.3" fill="#caceca"/><rect x="17" y="12" width="14.3" height="4.3" fill="#7f847b"/><rect x="31" y="12" width="15.3" height="4.3" fill="#373d32"/><rect x="46" y="12" width="14.9" height="4.3" fill="#60665c"/><rect x="3.4" y="16" width="13.9" height="4.3" fill="#969c93"/><rect x="17" y="16" width="14.3" height="4.3" fill="#4e544a"/><rect x="31" y="16" width="15.3" height="4.3" fill="#30362c"/><rect x="46" y="16" width="14.9" height="4.3" fill="#676d63"/><rect x="3.4" y="20" width="13.9" height="4.3" fill="#888d84"/><rect x="17" y="20" width="14.3" height="4.3" fill="#7f847b"/><rect x="31" y="20" width="15.3" height="4.3" fill="#4e544a"/><rect x="46" y="20" width="14.9" height="4.3" fill="#60665c"/><rect x="3.4" y="24" width="13.9" height="4.3" fill="#373d32"/><rect x="17" y="24" width="14.3" height="4.3" fill="#3d4238"/><rect x="31" y="24" width="15.3" height="4.3" fill="#3d4238"/><rect x="46" y="24" width="14.9" height="4.3" fill="#676d63"/><rect x="3.4" y="28" width="13.9" height="4.3" fill="#767b71"/><rect x="17" y="28" width="14.3" height="4.3" fill="#676d63"/><rect x="31" y="28" width="15.3" height="4.3" fill="#2b3026"/><rect x="46" y="28" width="14.9" height="4.3" fill="#545a50"/><rect x="3.4" y="32" width="13.9" height="4.3" fill="#30362c"/><rect x="17" y="32" width="14.3" height="4.3" fill="#30362c"/><rect x="31" y="32" width="15.3" height="4.3" fill="#2b3026"/><rect x="46" y="32" width="14.9" height="4.3" fill="#494e44"/><rect x="3.4" y="36" width="13.9" height="4.3" fill="#6f756a"/><rect x="17" y="36" width="14.3" height="4.3" fill="#60665c"/><rect x="31" y="36" width="15.3" height="4.3" fill="#373d32"/><rect x="46" y="36" width="14.9" height="4.3" fill="#3d4238"/><rect x="3.4" y="40" width="13.9" height="4.3" fill="#676d63"/><rect x="17" y="40" width="14.3" height="4.3" fill="#4e544a"/><rect x="31" y="40" width="15.3" height="4.3" fill="#43493e"/><rect x="46" y="40" width="14.9" height="4.3" fill="#42483e"/><rect x="3.4" y="44" width="13.9" height="4.3" fill="#3d4238"/><rect x="17" y="44" width="14.3" height="4.3" fill="#60655c"/><rect x="31" y="44" width="15.3" height="4.3" fill="#494e44"/><rect x="46" y="44" width="14.9" height="4.3" fill="#494e44"/><rect x="3.4" y="48" width="13.9" height="4.3" fill="#d3d7d0"/><rect x="17" y="48" width="14.3" height="4.3" fill="#c1c5be"/><rect x="31" y="48" width="15.3" height="4.3" fill="#494e44"/><rect x="46" y="48" width="14.9" height="4.3" fill="#3d4238"/><rect x="3.4" y="52" width="13.9" height="4.3" fill="#969b92"/><rect x="17" y="52" width="14.3" height="4.3" fill="#848980"/><rect x="31" y="52" width="15.3" height="4.3" fill="#494e44"/><rect x="46" y="52" width="14.9" height="4.3" fill="#30362c"/><rect x="3.4" y="56" width="13.9" height="4.3" fill="#b8bcb3"/><rect x="17" y="56" width="14.3" height="4.3" fill="#9da198"/><rect x="31" y="56" width="15.3" height="4.3" fill="#43493e"/><rect x="46" y="56" width="14.9" height="4.3" fill="#373d32"/><rect x="3.4" y="60" width="13.9" height="4.3" fill="#cacec5"/><rect x="17" y="60" width="14.3" height="4.3" fill="#a6aaa1"/><rect x="31" y="60" width="15.3" height="4.3" fill="#43493e"/><rect x="46" y="60" width="14.9" height="4.3" fill="#4e544a"/><rect x="3.4" y="64" width="13.9" height="4.3" fill="#969b92"/><rect x="17" y="64" width="14.3" height="4.3" fill="#848980"/><rect x="31" y="64" width="15.3" height="4.3" fill="#676c63"/><rect x="46" y="64" width="14.9" height="4.3" fill="#676c63"/><rect x="3.4" y="68" width="13.9" height="4.3" fill="#4e544a"/><rect x="17" y="68" width="14.3" height="4.3" fill="#3d4238"/><rect x="31" y="68" width="15.3" height="4.3" fill="#10120c"/><rect x="46" y="68" width="14.9" height="4.3" fill="#2b3026"/><rect x="3.4" y="72" width="13.9" height="4.3" fill="#60665c"/><rect x="17" y="72" width="14.3" height="4.3" fill="#43493f"/><rect x="31" y="72" width="15.3" height="4.3" fill="#0b0d08"/><rect x="46" y="72" width="14.9" height="4.3" fill="#23281e"/><rect x="3.4" y="76" width="13.9" height="4.3" fill="#72786e"/><rect x="17" y="76" width="14.3" height="4.3" fill="#3d4238"/><rect x="31" y="76" width="15.3" height="4.3" fill="#10120c"/><rect x="46" y="76" width="14.9" height="4.3" fill="#1d2319"/><path d="M4 0H48L4 21z" fill="#e6e9e6" opacity=".8"/><path d="M14 0L4 5M26 0L4 11M38 0L6 16" stroke="#9a9f9c" stroke-width="1" opacity=".7"/></g><path d="M52.5 0h7.5v52h-7.5z" fill="#a3a89f" opacity=".75"/>
<path d="M30 45Q30.3 42.5 33.5 41.8L35.5 39.5H38.5L40.5 41.8Q44.3 42.5 45 45L48.8 66.5H29z" fill="#f1f1ec"/>
<path d="M30.6 44L16.5 64L18.7 65.7L33 50z" fill="#ecece6"/><path d="M44.6 44L56.5 63L54.3 64.7L43.5 51z" fill="#ecece6"/>
<path d="M29 66.5H49L50.5 80H30z" fill="#1a1b18"/>
<ellipse cx="36.8" cy="32.8" rx="4" ry="4.4" fill="#151512"/><ellipse cx="37.4" cy="34.8" rx="2.2" ry="3" fill="#c9b7a2"/></svg></div>
<span class="t " id="t49" style="left:124.10px;top:424.41px;font-size:9.2px;letter-spacing:-0.402px;">IMG_7994.JPG</span>
<div class="thumb" style="left:221.8px;width:64px"><svg style="left:0;top:0" width="64" height="80.4" viewBox="0 0 64 80" preserveAspectRatio="none"><g filter="url(#bl)"><rect x="3.4" y="0" width="13.9" height="4.3" fill="#d0d6cd"/><rect x="17" y="0" width="14.3" height="4.3" fill="#94998f"/><rect x="31" y="0" width="15.3" height="4.3" fill="#6e7369"/><rect x="46" y="0" width="14.9" height="4.3" fill="#1d211a"/><rect x="3.4" y="4" width="13.9" height="4.3" fill="#c4cac1"/><rect x="17" y="4" width="14.3" height="4.3" fill="#777c72"/><rect x="31" y="4" width="15.3" height="4.3" fill="#8c9288"/><rect x="46" y="4" width="14.9" height="4.3" fill="#1d211a"/><rect x="3.4" y="8" width="13.9" height="4.3" fill="#94998f"/><rect x="17" y="8" width="14.3" height="4.3" fill="#a6aba1"/><rect x="31" y="8" width="15.3" height="4.3" fill="#757a70"/><rect x="46" y="8" width="14.9" height="4.3" fill="#1d211a"/><rect x="3.4" y="12" width="13.9" height="4.3" fill="#adb2a9"/><rect x="17" y="12" width="14.3" height="4.3" fill="#8e948a"/><rect x="31" y="12" width="15.3" height="4.3" fill="#4a5045"/><rect x="46" y="12" width="14.9" height="4.3" fill="#1d211a"/><rect x="3.4" y="16" width="13.9" height="4.3" fill="#777c72"/><rect x="17" y="16" width="14.3" height="4.3" fill="#52574d"/><rect x="31" y="16" width="15.3" height="4.3" fill="#8c9288"/><rect x="46" y="16" width="14.9" height="4.3" fill="#1d211a"/><rect x="3.4" y="20" width="13.9" height="4.3" fill="#4c5248"/><rect x="17" y="20" width="14.3" height="4.3" fill="#858b81"/><rect x="31" y="20" width="15.3" height="4.3" fill="#757a70"/><rect x="46" y="20" width="14.9" height="4.3" fill="#1d211a"/><rect x="3.4" y="24" width="13.9" height="4.3" fill="#94998f"/><rect x="17" y="24" width="14.3" height="4.3" fill="#a6aba1"/><rect x="31" y="24" width="15.3" height="4.3" fill="#4a5045"/><rect x="46" y="24" width="14.9" height="4.3" fill="#1d211a"/><rect x="3.4" y="28" width="13.9" height="4.3" fill="#8e948a"/><rect x="17" y="28" width="14.3" height="4.3" fill="#5e645a"/><rect x="31" y="28" width="15.3" height="4.3" fill="#383e34"/><rect x="46" y="28" width="14.9" height="4.3" fill="#1d211a"/><rect x="3.4" y="32" width="13.9" height="4.3" fill="#52574d"/><rect x="17" y="32" width="14.3" height="4.3" fill="#53594e"/><rect x="31" y="32" width="15.3" height="4.3" fill="#444a40"/><rect x="46" y="32" width="14.9" height="4.3" fill="#1d211a"/><rect x="3.4" y="36" width="13.9" height="4.3" fill="#777c72"/><rect x="17" y="36" width="14.3" height="4.3" fill="#5e645a"/><rect x="31" y="36" width="15.3" height="4.3" fill="#4a5045"/><rect x="46" y="36" width="14.9" height="4.3" fill="#1d211a"/><rect x="3.4" y="40" width="13.9" height="4.3" fill="#595e54"/><rect x="17" y="40" width="14.3" height="4.3" fill="#52574d"/><rect x="31" y="40" width="15.3" height="4.3" fill="#51564b"/><rect x="46" y="40" width="14.9" height="4.3" fill="#1d211a"/><rect x="3.4" y="44" width="13.9" height="4.3" fill="#60665c"/><rect x="17" y="44" width="14.3" height="4.3" fill="#545a50"/><rect x="31" y="44" width="15.3" height="4.3" fill="#4e544a"/><rect x="46" y="44" width="14.9" height="4.3" fill="#23261e"/><rect x="3.4" y="48" width="13.9" height="4.3" fill="#afb3aa"/><rect x="17" y="48" width="14.3" height="4.3" fill="#848980"/><rect x="31" y="48" width="15.3" height="4.3" fill="#60665c"/><rect x="46" y="48" width="14.9" height="4.3" fill="#2b2e26"/><rect x="3.4" y="52" width="13.9" height="4.3" fill="#a2a79e"/><rect x="17" y="52" width="14.3" height="4.3" fill="#848980"/><rect x="31" y="52" width="15.3" height="4.3" fill="#6f736a"/><rect x="46" y="52" width="14.9" height="4.3" fill="#373a31"/><rect x="3.4" y="56" width="13.9" height="4.3" fill="#676c63"/><rect x="17" y="56" width="14.3" height="4.3" fill="#676c63"/><rect x="31" y="56" width="15.3" height="4.3" fill="#60655c"/><rect x="46" y="56" width="14.9" height="4.3" fill="#43483e"/><rect x="3.4" y="60" width="13.9" height="4.3" fill="#969b92"/><rect x="17" y="60" width="14.3" height="4.3" fill="#848980"/><rect x="31" y="60" width="15.3" height="4.3" fill="#676c63"/><rect x="46" y="60" width="14.9" height="4.3" fill="#494d43"/><rect x="3.4" y="64" width="13.9" height="4.3" fill="#cacec5"/><rect x="17" y="64" width="14.3" height="4.3" fill="#a6aaa1"/><rect x="31" y="64" width="15.3" height="4.3" fill="#676c63"/><rect x="46" y="64" width="14.9" height="4.3" fill="#494d43"/><rect x="3.4" y="68" width="13.9" height="4.3" fill="#d3d7ce"/><rect x="17" y="68" width="14.3" height="4.3" fill="#afb3aa"/><rect x="31" y="68" width="15.3" height="4.3" fill="#676c63"/><rect x="46" y="68" width="14.9" height="4.3" fill="#43483e"/><rect x="3.4" y="72" width="13.9" height="4.3" fill="#b8bcb3"/><rect x="17" y="72" width="14.3" height="4.3" fill="#9da198"/><rect x="31" y="72" width="15.3" height="4.3" fill="#60655c"/><rect x="46" y="72" width="14.9" height="4.3" fill="#3d4137"/><rect x="3.4" y="76" width="13.9" height="4.3" fill="#848980"/><rect x="17" y="76" width="14.3" height="4.3" fill="#848980"/><rect x="31" y="76" width="15.3" height="4.3" fill="#555a51"/><rect x="46" y="76" width="14.9" height="4.3" fill="#373b31"/><path d="M3.4 17L49 6V10L3.4 22zM3.4 29L49 18V22L3.4 34z" fill="#c4c8c0" opacity=".45"/></g><rect x="58.3" y="0" width="2.3" height="80" fill="#878c83"/>
<path d="M28 50.5Q28.5 47.5 33 46.7L36 44.5H40L42 46.5Q50 48 53 53L58.3 62L54 67L55 80H31.5L31 67L28.5 60z" fill="#f3f3ee"/>
<path d="M30 58L52 64.5L51.2 67L30 61z" fill="#cfcfc8"/>
<ellipse cx="36.8" cy="33" rx="4.6" ry="5" fill="#151512"/><ellipse cx="38" cy="36.2" rx="2.7" ry="3.6" fill="#c9b7a2"/></svg></div>
<span class="t " id="t50" style="left:222.10px;top:424.41px;font-size:9.2px;letter-spacing:-0.402px;">IMG_8002.JPG</span>
<div class="thumb" style="left:319.8px;width:64px"><svg style="left:0;top:0" width="64" height="80.4" viewBox="0 0 64 80" preserveAspectRatio="none"><g filter="url(#bl)"><rect x="3.4" y="0" width="13.9" height="4.3" fill="#60665c"/><rect x="17" y="0" width="14.3" height="4.3" fill="#676d63"/><rect x="31" y="0" width="15.3" height="4.3" fill="#4e544a"/><rect x="46" y="0" width="14.9" height="4.3" fill="#3d4238"/><rect x="3.4" y="4" width="13.9" height="4.3" fill="#4e544a"/><rect x="17" y="4" width="14.3" height="4.3" fill="#5b6056"/><rect x="31" y="4" width="15.3" height="4.3" fill="#3d4238"/><rect x="46" y="4" width="14.9" height="4.3" fill="#4e544a"/><rect x="3.4" y="8" width="13.9" height="4.3" fill="#9dafb8"/><rect x="17" y="8" width="14.3" height="4.3" fill="#94a6af"/><rect x="31" y="8" width="15.3" height="4.3" fill="#30362c"/><rect x="46" y="8" width="14.9" height="4.3" fill="#252b21"/><rect x="3.4" y="12" width="13.9" height="4.3" fill="#84969f"/><rect x="17" y="12" width="14.3" height="4.3" fill="#768891"/><rect x="31" y="12" width="15.3" height="4.3" fill="#252b21"/><rect x="46" y="12" width="14.9" height="4.3" fill="#1f251b"/><rect x="3.4" y="16" width="13.9" height="4.3" fill="#2b3026"/><rect x="17" y="16" width="14.3" height="4.3" fill="#30362c"/><rect x="31" y="16" width="15.3" height="4.3" fill="#2b3026"/><rect x="46" y="16" width="14.9" height="4.3" fill="#42483e"/><rect x="3.4" y="20" width="13.9" height="4.3" fill="#848a80"/><rect x="17" y="20" width="14.3" height="4.3" fill="#8b9186"/><rect x="31" y="20" width="15.3" height="4.3" fill="#3d4238"/><rect x="46" y="20" width="14.9" height="4.3" fill="#43493f"/><rect x="3.4" y="24" width="13.9" height="4.3" fill="#7f847a"/><rect x="17" y="24" width="14.3" height="4.3" fill="#767b71"/><rect x="31" y="24" width="15.3" height="4.3" fill="#2b3026"/><rect x="46" y="24" width="14.9" height="4.3" fill="#1f251b"/><rect x="3.4" y="28" width="13.9" height="4.3" fill="#1f251b"/><rect x="17" y="28" width="14.3" height="4.3" fill="#252b21"/><rect x="31" y="28" width="15.3" height="4.3" fill="#252b21"/><rect x="46" y="28" width="14.9" height="4.3" fill="#2b3026"/><rect x="3.4" y="32" width="13.9" height="4.3" fill="#a2a79e"/><rect x="17" y="32" width="14.3" height="4.3" fill="#969b92"/><rect x="31" y="32" width="15.3" height="4.3" fill="#373d32"/><rect x="46" y="32" width="14.9" height="4.3" fill="#494e44"/><rect x="3.4" y="36" width="13.9" height="4.3" fill="#d3d7ce"/><rect x="17" y="36" width="14.3" height="4.3" fill="#c1c5bc"/><rect x="31" y="36" width="15.3" height="4.3" fill="#3d4238"/><rect x="46" y="36" width="14.9" height="4.3" fill="#2b3026"/><rect x="3.4" y="40" width="13.9" height="4.3" fill="#afb3aa"/><rect x="17" y="40" width="14.3" height="4.3" fill="#9da198"/><rect x="31" y="40" width="15.3" height="4.3" fill="#494e44"/><rect x="46" y="40" width="14.9" height="4.3" fill="#4e544a"/><rect x="3.4" y="44" width="13.9" height="4.3" fill="#2b3026"/><rect x="17" y="44" width="14.3" height="4.3" fill="#373d32"/><rect x="31" y="44" width="15.3" height="4.3" fill="#373d32"/><rect x="46" y="44" width="14.9" height="4.3" fill="#252b21"/><rect x="3.4" y="48" width="13.9" height="4.3" fill="#b8bcb3"/><rect x="17" y="48" width="14.3" height="4.3" fill="#a6aaa1"/><rect x="31" y="48" width="15.3" height="4.3" fill="#3d4238"/><rect x="46" y="48" width="14.9" height="4.3" fill="#1f251b"/><rect x="3.4" y="52" width="13.9" height="4.3" fill="#edf0ea"/><rect x="17" y="52" width="14.3" height="4.3" fill="#c1c5bc"/><rect x="31" y="52" width="15.3" height="4.3" fill="#3d4238"/><rect x="46" y="52" width="14.9" height="4.3" fill="#23281e"/><rect x="3.4" y="56" width="13.9" height="4.3" fill="#f2f4ef"/><rect x="17" y="56" width="14.3" height="4.3" fill="#9da198"/><rect x="31" y="56" width="15.3" height="4.3" fill="#3d4238"/><rect x="46" y="56" width="14.9" height="4.3" fill="#252b21"/><rect x="3.4" y="60" width="13.9" height="4.3" fill="#edf0ea"/><rect x="17" y="60" width="14.3" height="4.3" fill="#afb3aa"/><rect x="31" y="60" width="15.3" height="4.3" fill="#373d32"/><rect x="46" y="60" width="14.9" height="4.3" fill="#23281e"/><rect x="3.4" y="64" width="13.9" height="4.3" fill="#e5e8e1"/><rect x="17" y="64" width="14.3" height="4.3" fill="#cacec5"/><rect x="31" y="64" width="15.3" height="4.3" fill="#373d32"/><rect x="46" y="64" width="14.9" height="4.3" fill="#1f251b"/><rect x="3.4" y="68" width="13.9" height="4.3" fill="#dcdfd8"/><rect x="17" y="68" width="14.3" height="4.3" fill="#b8bcb3"/><rect x="31" y="68" width="15.3" height="4.3" fill="#30362c"/><rect x="46" y="68" width="14.9" height="4.3" fill="#1d2319"/><rect x="3.4" y="72" width="13.9" height="4.3" fill="#848980"/><rect x="17" y="72" width="14.3" height="4.3" fill="#676c63"/><rect x="31" y="72" width="15.3" height="4.3" fill="#252b21"/><rect x="46" y="72" width="14.9" height="4.3" fill="#1b2116"/><rect x="3.4" y="76" width="13.9" height="4.3" fill="#3d4238"/><rect x="17" y="76" width="14.3" height="4.3" fill="#373d32"/><rect x="31" y="76" width="15.3" height="4.3" fill="#191b16"/><rect x="46" y="76" width="14.9" height="4.3" fill="#191e14"/></g><path d="M28 47Q28.5 44 33 43.2L36 41H40.5L42.5 43Q50 44.5 53 49.5L58.3 57.5L54 63L54.5 77.5H31.5L31 64L28.5 57z" fill="#f3f3ee"/>
<path d="M30 55L52 60.5L51.2 63L30 58z" fill="#cfcfc8"/>
<path d="M31.5 77.5H54.5V80H31.5z" fill="#1d1f1b"/>
<ellipse cx="37.6" cy="31" rx="4.8" ry="5.2" fill="#151512"/><ellipse cx="38.8" cy="34.3" rx="2.8" ry="3.7" fill="#c9b7a2"/></svg></div>
<span class="t " id="t51" style="left:320.10px;top:424.41px;font-size:9.2px;letter-spacing:-0.402px;">IMG_8003.JPG</span>
<div class="thumb" style="left:417.8px;width:64px"><svg style="left:0;top:0" width="64" height="80.4" viewBox="0 0 64 80" preserveAspectRatio="none"><g filter="url(#bl)"><rect x="3.4" y="0" width="13.9" height="4.3" fill="#000200"/><rect x="17" y="0" width="14.3" height="4.3" fill="#000200"/><rect x="31" y="0" width="15.3" height="4.3" fill="#000200"/><rect x="46" y="0" width="14.9" height="4.3" fill="#000200"/><rect x="3.4" y="4" width="13.9" height="4.3" fill="#010300"/><rect x="17" y="4" width="14.3" height="4.3" fill="#070900"/><rect x="31" y="4" width="15.3" height="4.3" fill="#000200"/><rect x="46" y="4" width="14.9" height="4.3" fill="#000200"/><rect x="3.4" y="8" width="13.9" height="4.3" fill="#090b02"/><rect x="17" y="8" width="14.3" height="4.3" fill="#191b10"/><rect x="31" y="8" width="15.3" height="4.3" fill="#000200"/><rect x="46" y="8" width="14.9" height="4.3" fill="#000200"/><rect x="3.4" y="12" width="13.9" height="4.3" fill="#4e5141"/><rect x="17" y="12" width="14.3" height="4.3" fill="#3d3f2f"/><rect x="31" y="12" width="15.3" height="4.3" fill="#000200"/><rect x="46" y="12" width="14.9" height="4.3" fill="#000200"/><rect x="3.4" y="16" width="13.9" height="4.3" fill="#6f715f"/><rect x="17" y="16" width="14.3" height="4.3" fill="#494b3d"/><rect x="31" y="16" width="15.3" height="4.3" fill="#010300"/><rect x="46" y="16" width="14.9" height="4.3" fill="#000200"/><rect x="3.4" y="20" width="13.9" height="4.3" fill="#545647"/><rect x="17" y="20" width="14.3" height="4.3" fill="#2b2d1f"/><rect x="31" y="20" width="15.3" height="4.3" fill="#010300"/><rect x="46" y="20" width="14.9" height="4.3" fill="#000200"/><rect x="3.4" y="24" width="13.9" height="4.3" fill="#3d3f2f"/><rect x="17" y="24" width="14.3" height="4.3" fill="#232519"/><rect x="31" y="24" width="15.3" height="4.3" fill="#070900"/><rect x="46" y="24" width="14.9" height="4.3" fill="#010300"/><rect x="3.4" y="28" width="13.9" height="4.3" fill="#2b2d1f"/><rect x="17" y="28" width="14.3" height="4.3" fill="#1d1f14"/><rect x="31" y="28" width="15.3" height="4.3" fill="#070900"/><rect x="46" y="28" width="14.9" height="4.3" fill="#010300"/><rect x="3.4" y="32" width="13.9" height="4.3" fill="#232519"/><rect x="17" y="32" width="14.3" height="4.3" fill="#2b2d1f"/><rect x="31" y="32" width="15.3" height="4.3" fill="#070900"/><rect x="46" y="32" width="14.9" height="4.3" fill="#010300"/><rect x="3.4" y="36" width="13.9" height="4.3" fill="#2b2d1f"/><rect x="17" y="36" width="14.3" height="4.3" fill="#232519"/><rect x="31" y="36" width="15.3" height="4.3" fill="#070900"/><rect x="46" y="36" width="14.9" height="4.3" fill="#070900"/><rect x="3.4" y="40" width="13.9" height="4.3" fill="#1d1f14"/><rect x="17" y="40" width="14.3" height="4.3" fill="#303225"/><rect x="31" y="40" width="15.3" height="4.3" fill="#090b02"/><rect x="46" y="40" width="14.9" height="4.3" fill="#070900"/><rect x="3.4" y="44" width="13.9" height="4.3" fill="#2b2d1f"/><rect x="17" y="44" width="14.3" height="4.3" fill="#4e5141"/><rect x="31" y="44" width="15.3" height="4.3" fill="#090b02"/><rect x="46" y="44" width="14.9" height="4.3" fill="#070900"/><rect x="3.4" y="48" width="13.9" height="4.3" fill="#494b3d"/><rect x="17" y="48" width="14.3" height="4.3" fill="#3d3f2f"/><rect x="31" y="48" width="15.3" height="4.3" fill="#101209"/><rect x="46" y="48" width="14.9" height="4.3" fill="#090b02"/><rect x="3.4" y="52" width="13.9" height="4.3" fill="#3d3f2f"/><rect x="17" y="52" width="14.3" height="4.3" fill="#494b3d"/><rect x="31" y="52" width="15.3" height="4.3" fill="#101209"/><rect x="46" y="52" width="14.9" height="4.3" fill="#232519"/><rect x="3.4" y="56" width="13.9" height="4.3" fill="#424436"/><rect x="17" y="56" width="14.3" height="4.3" fill="#606351"/><rect x="31" y="56" width="15.3" height="4.3" fill="#101209"/><rect x="46" y="56" width="14.9" height="4.3" fill="#2b2d1f"/><rect x="3.4" y="60" width="13.9" height="4.3" fill="#3d3f2f"/><rect x="17" y="60" width="14.3" height="4.3" fill="#676954"/><rect x="31" y="60" width="15.3" height="4.3" fill="#101209"/><rect x="46" y="60" width="14.9" height="4.3" fill="#191b10"/><rect x="3.4" y="64" width="13.9" height="4.3" fill="#373929"/><rect x="17" y="64" width="14.3" height="4.3" fill="#545647"/><rect x="31" y="64" width="15.3" height="4.3" fill="#101209"/><rect x="46" y="64" width="14.9" height="4.3" fill="#101209"/><rect x="3.4" y="68" width="13.9" height="4.3" fill="#303225"/><rect x="17" y="68" width="14.3" height="4.3" fill="#3d3f2f"/><rect x="31" y="68" width="15.3" height="4.3" fill="#23251e"/><rect x="46" y="68" width="14.9" height="4.3" fill="#23251e"/><rect x="3.4" y="72" width="13.9" height="4.3" fill="#2b2d1f"/><rect x="17" y="72" width="14.3" height="4.3" fill="#303225"/><rect x="31" y="72" width="15.3" height="4.3" fill="#23251e"/><rect x="46" y="72" width="14.9" height="4.3" fill="#23251e"/><rect x="3.4" y="76" width="13.9" height="4.3" fill="#232519"/><rect x="17" y="76" width="14.3" height="4.3" fill="#2b2d1f"/><rect x="31" y="76" width="15.3" height="4.3" fill="#23251e"/><rect x="46" y="76" width="14.9" height="4.3" fill="#23251e"/></g><path d="M36 80L37 68.5H53.5L59 72V80z" fill="#353733"/>
<path d="M35 26.5Q38 23.5 43 24.5L48 27Q51.5 33 52 41L53.8 52V62L52 68.8L36.5 69L33 77.5L30 76.5L32.5 64L33.5 40z" fill="#f5f5f1"/>
<ellipse cx="31.3" cy="77.5" rx="1.8" ry="2.3" fill="#c9b7a2"/>
<ellipse cx="39" cy="11.5" rx="6.3" ry="6.8" fill="#0f0f0d"/><path d="M33.5 14Q33 22 36 24L40 20z" fill="#0f0f0d"/>
<ellipse cx="42.3" cy="17.8" rx="3.9" ry="4.7" fill="#d2bfa9"/><path d="M39.5 22L42 27H38z" fill="#d2bfa9"/></svg></div>
<span class="t " id="t52" style="left:418.10px;top:424.41px;font-size:9.2px;letter-spacing:-0.402px;">IMG_8012.JPG</span>
<div class="thumb" style="left:515.7px;width:17.3px"><svg style="left:0;top:0" width="64" height="80.4" viewBox="0 0 64 80" preserveAspectRatio="none"><g filter="url(#bl)"><rect x="3.6" y="0" width="15" height="4.3" fill="#15170f"/><rect x="3.6" y="4" width="15" height="4.3" fill="#15170f"/><rect x="3.6" y="8" width="15" height="4.3" fill="#1a1c14"/><rect x="3.6" y="12" width="15" height="4.3" fill="#6a6c5c"/><rect x="3.6" y="16" width="15" height="4.3" fill="#9a9c8a"/><rect x="3.6" y="20" width="15" height="4.3" fill="#85877a"/><rect x="3.6" y="24" width="15" height="4.3" fill="#5a5c4e"/><rect x="3.6" y="28" width="15" height="4.3" fill="#55574a"/><rect x="3.6" y="32" width="15" height="4.3" fill="#6a6c5c"/><rect x="3.6" y="36" width="15" height="4.3" fill="#4a4c3e"/><rect x="3.6" y="40" width="15" height="4.3" fill="#55574a"/><rect x="3.6" y="44" width="15" height="4.3" fill="#5f6153"/><rect x="3.6" y="48" width="15" height="4.3" fill="#6a6c5c"/><rect x="3.6" y="52" width="15" height="4.3" fill="#70725f"/><rect x="3.6" y="56" width="15" height="4.3" fill="#777966"/><rect x="3.6" y="60" width="15" height="4.3" fill="#8a8c78"/><rect x="3.6" y="64" width="15" height="4.3" fill="#85877a"/><rect x="3.6" y="68" width="15" height="4.3" fill="#8a8c78"/><rect x="3.6" y="72" width="15" height="4.3" fill="#808270"/><rect x="3.6" y="76" width="15" height="4.3" fill="#777966"/></g></svg></div>
<span class="t " id="t53" style="left:516.00px;top:424.41px;font-size:9.2px;letter-spacing:-0.402px;width:17px;overflow:hidden;">IMG_8013.JPG</span>
<div style="left:0;top:0;width:0;height:0;z-index:7"><div style="position:absolute;left:533px;top:341px;width:14px;height:106px;background:#f0f0f0"></div>
<div style="position:absolute;left:26px;top:434px;width:508px;height:13px;background:#f0f0f0"></div>
<div class="sth v" style="left:534.2px;top:357px;width:11.8px;height:59px"></div>
<div style="position:absolute;left:537px;top:382.5px;width:6px;height:1px;background:#666;box-shadow:0 2px 0 #666,0 4px 0 #666"></div>
<svg style="left:537px;top:347.5px" width="6" height="4"><path d="M0 4L3 0L6 4z" fill="#444"/></svg>
<svg style="left:537px;top:424px" width="6" height="4"><path d="M0 0L3 4L6 0z" fill="#444"/></svg>
<div class="sth" style="left:40px;top:435.5px;width:153px;height:10.6px"></div>
<div style="position:absolute;left:114px;top:438px;width:1px;height:5px;background:#666;box-shadow:2px 0 0 #666,4px 0 0 #666"></div>
<svg style="left:30.5px;top:437.8px" width="3.6" height="5.6"><path d="M3.6 0L0 2.8L3.6 5.6z" fill="#444"/></svg>
<svg style="left:525px;top:437.8px" width="3.6" height="5.6"><path d="M0 0L3.6 2.8L0 5.6z" fill="#444"/></svg>
</div><svg style="left:558px;top:340.6px" width="10.2" height="12.2" viewBox="0 0 10.2 12.2"><rect x=".4" y=".4" width="9.4" height="11.4" fill="#f0f4fd" stroke="#5b97e0" stroke-width=".8"/><rect x=".4" y=".4" width="9.4" height="1.9" fill="#4f8fe0"/><rect x=".4" y="11" width="9.4" height=".9" fill="#3c64a8"/><path d="M3.9 3.6h2.4v3h1.9L5.1 10.2L2 6.6h1.9z" fill="#3f72dc"/></svg>


</div>
</body></html>
